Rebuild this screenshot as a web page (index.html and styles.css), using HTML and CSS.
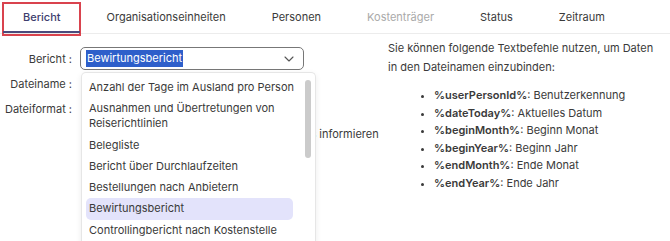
FILE: index.html
```html
<!DOCTYPE html>
<html lang="de">
<head>
<meta charset="utf-8">
<link rel="stylesheet" href="styles.css">
</head>
<body>
<nav class="tabs">
  <div class="tab active">Bericht</div>
  <div class="tab">Organisationseinheiten</div>
  <div class="tab">Personen</div>
  <div class="tab disabled">Kostenträger</div>
  <div class="tab">Status</div>
  <div class="tab">Zeitraum</div>
</nav>
<main class="content">
  <section class="form">
    <div class="row">
      <label class="label">Bericht :</label>
      <div class="select-wrap">
        <div class="select">
          <span class="sel-text">Bewirtungsbericht</span>
          <svg class="chev" width="10" height="6" viewBox="0 0 10 6"><path d="M1 1l4 4 4-4" fill="none" stroke="#555" stroke-width="1.1" stroke-linecap="round" stroke-linejoin="round"/></svg>
        </div>
        <ul class="dropdown">
          <li>Anzahl der Tage im Ausland pro Person</li>
          <li>Ausnahmen und Übertretungen von<br>Reiserichtlinien</li>
          <li>Belegliste</li>
          <li>Bericht über Durchlaufzeiten</li>
          <li>Bestellungen nach Anbietern</li>
          <li class="hl">Bewirtungsbericht</li>
          <li>Controllingbericht nach Kostenstelle</li>
        </ul>
        <div class="scroll-thumb"></div>
      </div>
    </div>
    <div class="row">
      <label class="label">Dateiname :</label>
      <div class="field"></div>
    </div>
    <div class="row">
      <label class="label">Dateiformat :</label>
      <div class="field"></div>
    </div>
    <div class="row check-row">
      <span class="label"></span>
      <span class="check-text">Empfänger über den Status des Berichts informieren</span>
    </div>
  </section>
  <aside class="help">
    <p>Sie können folgende Textbefehle nutzen, um Daten in den Dateinamen einzubinden:</p>
    <ul>
      <li><b>%userPersonId%</b>: Benutzerkennung</li>
      <li><b>%dateToday%</b>: Aktuelles Datum</li>
      <li><b>%beginMonth%</b>: Beginn Monat</li>
      <li><b>%beginYear%</b>: Beginn Jahr</li>
      <li><b>%endMonth%</b>: Ende Monat</li>
      <li><b>%endYear%</b>: Ende Jahr</li>
    </ul>
  </aside>
</main>
</body>
</html>
```
FILE: styles.css
```css
* { box-sizing: border-box; }
html, body { margin: 0; padding: 0; background: #fff; }
body {
  font-family: Inter, "Noto Sans", sans-serif;
  font-size: 11px;
  color: #3a3a3a;
  width: 670px;
  height: 241px;
  overflow: hidden;
}
.tabs {
  display: flex;
  height: 34px;
  border-bottom: 1px solid #ececec;
}
.tab {
  display: flex;
  align-items: center;
  padding: 0 23px;
  height: 34px;
  position: relative;
}
.tab.active {
  color: #3e3e6e;
  font-weight: 500;
}
.tab.active::after {
  content: "";
  position: absolute;
  left: 3px;
  right: 4px;
  bottom: 1px;
  height: 2px;
  background: #4a4a7c;
}
.tab.active::before {
  content: "";
  position: absolute;
  left: 2px;
  right: 3px;
  top: 2px;
  bottom: -2px;
  border: 2px solid #d9434e;
}
.tab.disabled { color: #aaa; }

.content {
  display: flex;
  padding-top: 12px;
}
.form {
  width: 388px;
  flex-shrink: 0;
  display: flex;
  flex-direction: column;
}
.row {
  display: flex;
  align-items: center;
  height: 25px;
}
.label {
  width: 72px;
  flex-shrink: 0;
  text-align: right;
  margin-right: 8px;
  white-space: nowrap;
}
.select-wrap { position: relative; }
.select {
  width: 224px;
  height: 23px;
  border: 1px solid #777;
  border-radius: 5px;
  display: flex;
  align-items: center;
  justify-content: space-between;
  padding: 0 9px 0 5px;
}
.sel-text {
  background: #2e5fca;
  color: #fff;
  padding: 1px 1px;
  line-height: 15px;
}
.chev { display: block; }
.field { width: 224px; height: 23px; }
.check-row { width: 400px; }
.check-text { flex-shrink: 0; padding-left: 26px; white-space: nowrap; }

.dropdown {
  position: absolute;
  top: 25px;
  left: 1px;
  width: 235px;
  height: 180px;
  margin: 0;
  padding: 4px 22px 0 4px;
  list-style: none;
  background: #fff;
  border: 1px solid #e6e6e6;
  border-bottom: none;
  border-radius: 5px 5px 0 0;
  box-shadow: 0 2px 6px rgba(0,0,0,0.08);
  z-index: 5;
  overflow: hidden;
}
.dropdown li {
  padding: 3px 3px 3.3px;
  line-height: 15px;
  border-radius: 5px;
  white-space: nowrap;
}
.dropdown li.hl { background: #e3e3fb; }
.scroll-thumb {
  position: absolute;
  z-index: 6;
  left: 225px;
  top: 33px;
  width: 6px;
  height: 78px;
  border-radius: 3px;
  background: #cbcbcb;
}

.help {
  flex: 1;
  line-height: 19px;
}
.help p { margin: -7px 0 0 0; width: 272px; }
.help ul {
  margin: 10px 0 0 0;
  padding-left: 46px;
  line-height: 17.5px;
}
.help li::marker { font-size: 10px; }
.help b { font-weight: 600; }
```
